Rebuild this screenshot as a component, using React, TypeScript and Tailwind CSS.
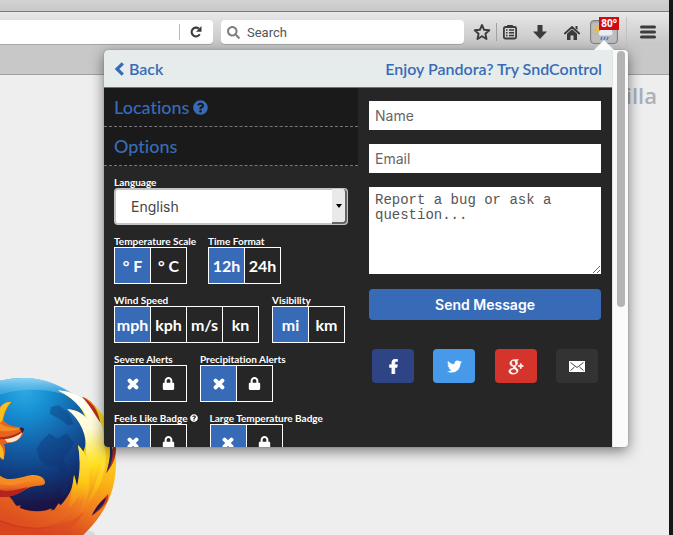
import React, { useState } from "react";
import {
  FaFacebookF,
  FaTwitter,
  FaQuestionCircle,
  FaLock,
  FaTimes,
  FaSearch,
} from "react-icons/fa";
import { TiSocialGooglePlus } from "react-icons/ti";

type Choice = { key: string; text: React.ReactNode; name?: string };

function ToggleGroup({
  label,
  help,
  choices,
}: {
  label: string;
  help?: boolean;
  choices: Choice[];
}) {
  const [active, setActive] = useState(choices[0].key);
  return (
    <div role="group" aria-label={label}>
      <div className="flex h-3 items-center gap-0.5 text-[10px] font-bold leading-3 text-white">
        <span>{label}</span>
        {help && <FaQuestionCircle size={8} />}
      </div>
      <div className="flex w-max border border-white">
        {choices.map((c, i) => (
          <button
            key={c.key}
            type="button"
            aria-label={c.name}
            aria-pressed={active === c.key}
            onClick={() => setActive(c.key)}
            className={
              "flex h-[35px] items-center justify-center text-base font-bold text-white " +
              (i > 0 ? "w-9 border-l border-white " : "w-[35px] ") +
              (active === c.key ? "bg-[#386bb7]" : "bg-[#262626]")
            }
          >
            {c.text}
          </button>
        ))}
      </div>
    </div>
  );
}

const onOff: Choice[] = [
  { key: "off", name: "Off", text: <FaTimes size={14} stroke="white" strokeWidth={50} /> },
  { key: "locked", name: "Locked", text: <FaLock size={13} /> },
];

function FirefoxLogo() {
  return (
    <svg viewBox="0 0 420 525" className="h-[175px] w-[140px] shrink-0" aria-hidden="true">
      <defs>
        <radialGradient id="globe" gradientUnits="userSpaceOnUse" cx="75" cy="90" r="370">
          <stop offset="0" stopColor="#2fa9e2" />
          <stop offset="0.2" stopColor="#168fd2" />
          <stop offset="0.45" stopColor="#1462a9" />
          <stop offset="0.7" stopColor="#113a7c" />
          <stop offset="0.95" stopColor="#1a1344" />
        </radialGradient>
        <linearGradient id="rim" x1="0" y1="0" x2="0" y2="1">
          <stop offset="0" stopColor="#8fd4f5" />
          <stop offset="1" stopColor="#2b9bda" stopOpacity="0.3" />
        </linearGradient>
        <linearGradient id="body" gradientUnits="userSpaceOnUse" x1="300" y1="200" x2="150" y2="530">
          <stop offset="0" stopColor="#ffe21f" />
          <stop offset="0.4" stopColor="#fbb417" />
          <stop offset="0.7" stopColor="#ee7420" />
          <stop offset="1" stopColor="#cf3a1e" />
        </linearGradient>
        <linearGradient id="white" gradientUnits="userSpaceOnUse" x1="210" y1="100" x2="280" y2="390">
          <stop offset="0" stopColor="#ffffff" />
          <stop offset="0.4" stopColor="#fffbd5" />
          <stop offset="0.75" stopColor="#ffe21c" />
          <stop offset="1" stopColor="#f9a51a" stopOpacity="0.3" />
        </linearGradient>
        <linearGradient id="yellow" gradientUnits="userSpaceOnUse" x1="240" y1="260" x2="220" y2="470">
          <stop offset="0" stopColor="#ffee55" />
          <stop offset="0.5" stopColor="#fdc814" />
          <stop offset="1" stopColor="#f07c20" stopOpacity="0" />
        </linearGradient>
        <linearGradient id="arm" x1="0" y1="0" x2="0" y2="1">
          <stop offset="0" stopColor="#f7a01e" />
          <stop offset="0.55" stopColor="#ed6a20" />
          <stop offset="1" stopColor="#a3201c" />
        </linearGradient>
      </defs>
      <ellipse cx="225" cy="522" rx="60" ry="14" fill="#dadada" />
      <path d="M0 62Q38 52 80 54C165 58 245 106 285 185C320 270 300 390 220 450L0 500Z" fill="url(#globe)" />
      <path d="M0 62Q38 52 80 54C140 56 205 82 255 130C180 86 85 78 0 104Z" fill="url(#rim)" />
      <path d="M152 142L176 135L205 158L222 192L205 196L180 178L150 162ZM122 246L148 220L172 236L200 220L222 250L206 275L190 300L205 330L192 348L170 320L140 318L118 296L110 268ZM190 375L210 362L202 400L184 412Z" fill="#0d3070" opacity="0.38" />
      <path d="M246 110C312 142 350 220 348 310C347 390 320 458 250 525H0V392C30 402 42 426 48 438L62 436L60 444C95 458 135 456 154 445L152 452L162 450L176 430L182 436C210 405 220 380 222 345L232 380C245 340 240 290 234 255L250 275C268 235 250 180 202 148C232 150 245 160 256 174C250 145 215 110 174 92C215 90 255 116 286 150Z" fill="url(#body)" />
      <path d="M174 91C245 96 292 142 309 208C323 278 307 347 257 413C285 340 292 280 276 220C264 160 231 119 174 91Z" fill="url(#white)" />
      <path d="M202 148C260 151 290 204 296 263C303 325 281 383 246 420C263 370 268 330 258 280C262 222 242 183 202 148Z" fill="url(#white)" />
      <path d="M234 255C267 288 273 331 263 368C251 420 221 450 190 474C235 402 247 330 234 255Z" fill="url(#yellow)" />
      <path d="M222 345C237 386 233 421 200 459C212 415 217 380 222 345ZM258 313C277 361 270 422 235 480C250 410 263 365 258 313ZM315 260C326 335 293 405 247 456C280 393 304 330 315 260Z" fill="url(#yellow)" />
      <path d="M246 110C272 118 290 139 302 189C286 165 267 133 246 110Z" fill="#b62c20" />
      <path d="M246 110C268 122 285 139 297 165L303 177C291 145 280 130 282 136C270 120 260 115 246 110Z" fill="#f38b24" />
      <path d="M345 246C354 276 342 313 319 339C328 309 333 285 332 260L336 271Z" fill="#b92c22" />
      <path d="M336 258C341 286 334 317 319 339C328 309 332 280 329 257Z" fill="#172c5f" />
      <path d="M324 402C329 421 315 441 275 468C290 437 306 421 324 402Z" fill="#cb3b21" />
      <path d="M318 412C315 431 300 447 276 466C288 439 302 426 318 412Z" fill="#26194b" />
      <path d="M0 404C28 410 42 430 60 445C100 462 140 455 155 446C182 466 210 447 240 410C218 482 144 523 38 493L0 480Z" fill="#ed6b22" opacity="0.45" />
      <path d="M0 486C90 520 190 512 253 455C229 491 209 511 183 525H0Z" fill="#df4b20" opacity="0.6" />
      <path d="M0 347C22 365 52 355 83 347C116 340 137 354 135 370C130 381 104 375 84 384C57 400 40 413 0 411Z" fill="url(#arm)" />
      <path d="M0 390C30 398 50 388 84 382C57 400 40 413 0 411Z" fill="#b5231f" />
      <path d="M0 352C28 370 56 358 84 350C102 346 116 351 126 358C92 358 62 374 32 376L0 372Z" fill="#f58b24" />
      <path d="M0 141C12 128 22 126 34 126C20 143 14 160 10 181C26 200 44 201 72 202C74 224 60 245 30 248L12 252C18 270 15 291 8 300L0 294Z" fill="#e9631f" />
      <path d="M0 143C11 129 21 126 34 126C18 141 13 158 7 182L0 188Z" fill="#f6c11c" />
      <path d="M0 190C20 204 44 205 66 203C50 212 26 216 0 212Z" fill="#f28a26" />
      <path d="M0 232C30 230 48 222 67 212C60 226 36 238 0 238Z" fill="#a9301f" />
      <path d="M14 238C34 235 52 228 66 218C60 238 46 248 22 247Z" fill="#fde6c8" />
      <path d="M58 204Q66 199 72 205Q73 216 67 220Z" fill="#38202c" />
      <path d="M0 252C8 262 13 275 11 299L0 290Z" fill="#f7bb25" />
    </svg>
  );
}

function WeatherIcon() {
  return (
    <svg viewBox="0 0 20 18" className="h-[18px] w-5" aria-hidden="true">
      <path d="M6 0v3M1 2l2 2M0 7h3M1 12l2-2M11 2L9 4" stroke="#f2b22b" strokeWidth="1.3" />
      <circle cx="6" cy="7" r="3.4" fill="#f8bd35" />
      <path d="M6 13a3 3 0 0 1 0-5.500A4 4 0 0 1 13 6a3.600 3.600 0 0 1 4 7z" fill="#e9eef2" stroke="#a7adb2" strokeWidth="0.7" />
      <path d="M8 14l-1 3M11 14l-1 3M14 14l-1 3" stroke="#3e8ae0" strokeWidth="1.6" />
    </svg>
  );
}

function Toolbar() {
  return (
    <div className="flex h-[33px] items-start pt-2 text-[#3b3b3b]">
      <div className="flex h-6 min-w-0 flex-1 items-center rounded-r bg-white shadow-[0_1px_0_#a8a8a8]">
        <input aria-label="Address" className="h-6 min-w-0 flex-1 bg-transparent px-2 text-sm outline-none" />
        <span className="h-4 w-px bg-[#bcbcbc]" />
        <button type="button" aria-label="Reload" className="flex w-8 items-center justify-center">
          <svg viewBox="0 0 14 14" className="size-3.5" aria-hidden="true">
            <path d="M10.800 9.300A4.400 4.400 0 1 1 9.800 3.600" fill="none" stroke="currentColor" strokeWidth="2.100" />
            <path d="M12.500 1v5.700H7z" fill="currentColor" />
          </svg>
        </button>
        <span className="w-px" />
      </div>
      <div className="ml-2 flex h-6 w-[243px] items-center rounded bg-white pl-1.5 shadow-[0_1px_0_#a8a8a8]">
        <FaSearch size={13} className="shrink-0 text-[#808080]" />
        <input
          aria-label="Search"
          placeholder="Search"
          className="ml-[7px] h-6 min-w-0 flex-1 bg-transparent font-['Roboto',sans-serif] text-[13px] outline-none placeholder:text-[#555]"
        />
      </div>
      <div className="flex h-6 items-center pl-1.5">
        <button type="button" aria-label="Bookmark" className="flex w-6 justify-center">
          <svg viewBox="0 0 18 18" className="size-[18px]" aria-hidden="true">
            <path d="M9 2l2.100 4.800 5.200.5-3.900 3.500 1.100 5.200L9 13.300 4.500 16l1.100-5.200L1.700 7.300l5.200-.5z" fill="none" stroke="currentColor" strokeWidth="1.900" strokeLinejoin="round" />
          </svg>
        </button>
        <span className="ml-0.5 h-[18px] w-px bg-[#a0a0a0]" />
        <button type="button" aria-label="Bookmarks list" className="ml-px flex w-6 justify-center">
          <svg viewBox="0 0 16 16" className="size-4" aria-hidden="true">
            <rect x="1.900" y="3" width="12.200" height="11.500" rx="1.500" fill="none" stroke="currentColor" strokeWidth="1.800" />
            <path d="M5 3V1.500Q5 1 5.500 1h5q.5 0 .5.500V3z" fill="currentColor" />
            <path d="M4 6h1.500M7 6h5M4 8.700h1.500M7 8.700h5M4 11.500h1.500M7 11.500h5" stroke="currentColor" strokeWidth="1.400" />
          </svg>
        </button>
        <button type="button" aria-label="Downloads" className="ml-1.5 flex w-6 justify-center">
          <svg viewBox="0 0 14 14" className="size-3.5" aria-hidden="true">
            <path d="M4.500 0h5v6.500H14L7 14 0 6.500h4.500z" fill="currentColor" />
          </svg>
        </button>
        <button type="button" aria-label="Home" className="ml-2 flex w-6 justify-center">
          <svg viewBox="0 0 16 15" className="h-[15px] w-4" aria-hidden="true">
            <path d="M8 2L.8 8.500M8 2l7.200 6.500" stroke="currentColor" strokeWidth="1.800" strokeLinecap="round" />
            <path d="M11.500 1h2v4l-2-1.800zM8 4.300l5 4.500V15H9.500v-4.500h-3V15H3V8.800z" fill="currentColor" />
          </svg>
        </button>
        <button
          type="button"
          aria-label="Weather"
          className="relative ml-1.5 flex h-6 w-7 items-center justify-center rounded-sm border border-[#808080] bg-[#bebebe] shadow-[inset_0_1px_2px_#999]"
        >
          <WeatherIcon />
          <span className="absolute -right-0.5 -top-1 flex h-[13px] items-center bg-[#cf0a14] px-0.5 font-['Open_Sans',sans-serif] text-[10px] font-bold leading-[13px] text-white">
            80°
          </span>
        </button>
        <span className="ml-2 h-[30px] w-px bg-[#c2c2c2]" />
        <button type="button" aria-label="Menu" className="ml-[9px] mr-[9px] flex w-6 justify-center">
          <svg viewBox="0 0 16 14" className="h-3.5 w-4" aria-hidden="true">
            <path d="M1.500 2h13M1.500 7h13M1.500 12h13" stroke="currentColor" strokeWidth="3" strokeLinecap="round" />
          </svg>
        </button>
      </div>
    </div>
  );
}

function OptionsColumn() {
  return (
    <section className="w-[254px] shrink-0">
      <h2 className="flex h-[39px] items-center gap-1 border-b border-dashed border-[#777] bg-[#1a1a1a] px-2.5 text-lg font-medium text-[#386bb7]">
        Locations <FaQuestionCircle size={15} />
      </h2>
      <h2 className="flex h-[39px] items-center border-b border-dashed border-[#777] bg-[#1a1a1a] px-2.5 text-lg font-medium text-[#386bb7]">
        Options
      </h2>
      <div className="px-2.5 pt-2.5">
        <label htmlFor="language" className="block text-[10px] font-bold leading-3 text-white">
          Language
        </label>
        <div className="relative">
          <select
            id="language"
            className="block h-[37px] w-full appearance-none rounded border-2 border-[#c4c4c4] bg-white px-[15px] font-['Inter',sans-serif] text-sm text-[#444]"
          >
            <option>English</option>
          </select>
          <span className="pointer-events-none absolute bottom-px right-px top-px flex w-[15px] items-center justify-center rounded-r-sm border-b-2 border-r-2 border-[#666] bg-[#e9e9e9]">
            <span className="border-x-[3px] border-t-[4px] border-x-transparent border-t-black" />
          </span>
        </div>
        <div className="mt-2.5 flex flex-col gap-2.5">
          <div className="flex gap-3">
            <ToggleGroup
              label="Temperature Scale"
              choices={[
                { key: "f", text: "° F" },
                { key: "c", text: "° C" },
              ]}
            />
            <ToggleGroup
              label="Time Format"
              choices={[
                { key: "12", text: "12h" },
                { key: "24", text: "24h" },
              ]}
            />
          </div>
          <div className="flex gap-[13px]">
            <ToggleGroup
              label="Wind Speed"
              choices={[
                { key: "mph", text: "mph" },
                { key: "kph", text: "kph" },
                { key: "ms", text: "m/s" },
                { key: "kn", text: "kn" },
              ]}
            />
            <ToggleGroup
              label="Visibility"
              choices={[
                { key: "mi", text: "mi" },
                { key: "km", text: "km" },
              ]}
            />
          </div>
          <div className="flex gap-[13px]">
            <ToggleGroup label="Severe Alerts" choices={onOff} />
            <ToggleGroup label="Precipitation Alerts" choices={onOff} />
          </div>
          <div className="flex gap-3">
            <ToggleGroup label="Feels Like Badge" help choices={onOff} />
            <ToggleGroup label="Large Temperature Badge" choices={onOff} />
          </div>
        </div>
      </div>
    </section>
  );
}

function ContactColumn() {
  return (
    <section className="min-w-0 flex-1 px-[11px] pt-[13px]">
      <form className="flex flex-col" onSubmit={(e) => e.preventDefault()}>
        <input
          aria-label="Name"
          placeholder="Name"
          className="h-[29px] bg-white px-1.5 font-['Inter',sans-serif] text-sm outline-none placeholder:text-[#666]"
        />
        <input
          aria-label="Email"
          placeholder="Email"
          className="mt-3.5 h-[29px] bg-white px-1.5 font-['Inter',sans-serif] text-sm outline-none placeholder:text-[#666]"
        />
        <textarea
          aria-label="Report a bug or ask a question"
          placeholder="Report a bug or ask a question..."
          className="mt-3.5 h-[87px] resize-y bg-white px-1.5 py-1.5 pr-8 font-['Courier_New','Liberation_Mono',monospace] text-sm leading-[15px] outline-none placeholder:text-[#555]"
        />
        <button
          type="submit"
          className="mt-[15px] h-[31px] rounded bg-[#386bb7] font-['Inter',sans-serif] text-sm font-semibold text-white"
        >
          Send Message
        </button>
      </form>
      <nav className="mt-[29px] flex justify-between px-[3px] text-white">
        <a href="#facebook" aria-label="Facebook" className="flex h-[34px] w-[42px] items-center justify-center rounded bg-[#2f4485]">
          <FaFacebookF size={15} stroke="white" strokeWidth={20} />
        </a>
        <a href="#twitter" aria-label="Twitter" className="flex h-[34px] w-[42px] items-center justify-center rounded bg-[#479ae9]">
          <FaTwitter size={15} />
        </a>
        <a href="#google" aria-label="Google Plus" className="flex h-[34px] w-[42px] items-center justify-center rounded bg-[#d4342c]">
          <TiSocialGooglePlus size={23} stroke="white" strokeWidth={0.8} />
        </a>
        <a href="#mail" aria-label="Mail" className="flex h-[34px] w-[42px] items-center justify-center rounded bg-[#333]">
          <svg viewBox="0 0 16 11" className="h-[11px] w-4" aria-hidden="true">
            <path d="M0 0h16v11H0z" fill="#fff" />
            <path d="M1.500 1.500L8 6.500l6.500-5M1.500 9.500L5.500 6M14.500 9.500L10.500 6" fill="none" stroke="#333" strokeWidth="0.900" />
          </svg>
        </a>
      </nav>
    </section>
  );
}

function WeatherPopup() {
  return (
    <div className="absolute right-[41px] top-[50px] w-[524px] rounded shadow-[0_0_1px_#555,0_4px_14px_rgba(0,0,0,0.5)]">
      <svg viewBox="0 0 20 10" className="absolute -top-2.5 right-[14px] h-2.5 w-5" aria-hidden="true">
        <path d="M0 10L10 0l10 10z" fill="#fafafa" />
      </svg>
      <div className="flex h-[397px] overflow-hidden rounded bg-[#fafafa]">
        <div className="min-w-0 flex-1 bg-[#262626]">
          <header className="flex h-[38px] items-center justify-between border-b border-[#66787a] bg-[#e6ecec] px-2.5 text-base font-semibold text-[#386bb7]">
            <a href="#back" className="flex items-center gap-1">
              <svg viewBox="0 0 11 14" className="h-3.5 w-[11px]" aria-hidden="true">
                <path d="M8.800 1.400L3 7l5.800 5.600" fill="none" stroke="currentColor" strokeWidth="3.200" />
              </svg>
              Back
            </a>
            <a href="#sndcontrol">Enjoy Pandora? Try SndControl</a>
          </header>
          <div className="flex">
            <OptionsColumn />
            <ContactColumn />
          </div>
        </div>
        <div className="flex w-4 justify-center border-l border-[#e4e4e4] pt-px">
          <div className="h-64 w-2 rounded-full bg-[#b4b4b4]" />
        </div>
      </div>
    </div>
  );
}

export default function App() {
  return (
    <div className="flex h-screen overflow-hidden bg-[#15161a] font-['Lato',sans-serif] [font-variant-ligatures:none]">
      <div className="relative flex min-w-0 flex-1 flex-col bg-[#eeeeee]">
        <div className="h-3 shrink-0 border-b border-[#7c7c7c] bg-linear-to-b from-[#d2d2d2] to-[#c9c9c9]" />
        <div className="h-[63px] shrink-0 border-b border-[#a0a0a0] bg-linear-to-b from-[#e8e8e8] via-[#c8c8c8] to-[#c8c8c8]">
          <Toolbar />
        </div>
        <main className="flex min-h-0 flex-1 flex-col justify-between">
          <div className="self-end pr-3 pt-1 font-['Open_Sans',sans-serif] text-[22px] font-semibold leading-8 text-[#a9b1b9]">
            illa
          </div>
          <FirefoxLogo />
        </main>
        <WeatherPopup />
      </div>
      <div className="w-1 shrink-0" />
    </div>
  );
}
